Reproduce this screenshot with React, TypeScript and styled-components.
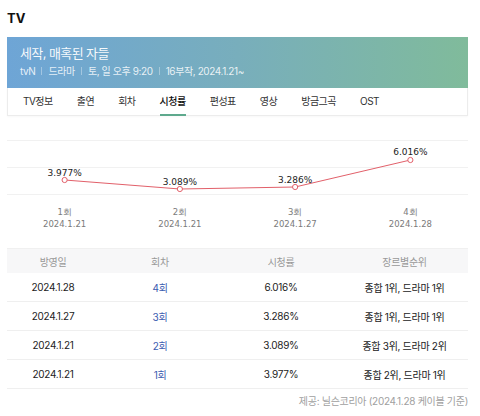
import React from 'react';
import styled, { createGlobalStyle } from 'styled-components';

const GlobalStyle = createGlobalStyle`
  body {
    margin: 0;
    background: #fff;
    font-family: 'Inter', 'Noto Sans CJK KR', sans-serif;
    color: #222;
  }
`;

const Page = styled.div`
  width: 461px;
  margin-left: 7px;
`;

const Heading = styled.h2`
  margin: 0;
  height: 37px;
  line-height: 36px;
  font-size: 13px;
  font-weight: 700;
  color: #111;
`;

const Banner = styled.div`
  height: 51px;
  box-sizing: border-box;
  padding: 7px 0 0 13px;
  background: linear-gradient(90deg, #6ea5d6 0%, #78aebc 50%, #80bb9b 100%);
  color: #fff;
`;

const Title = styled.div`
  font-size: 13px;
  line-height: 18px;
  letter-spacing: -0.6px;
  color: rgba(255, 255, 255, 0.95);
`;

const Meta = styled.div`
  display: flex;
  align-items: center;
  margin-top: 1px;
  font-size: 10px;
  line-height: 16px;
  letter-spacing: -0.4px;
  color: rgba(255, 255, 255, 0.85);
`;

const Sep = styled.span`
  width: 1px;
  height: 8px;
  margin: 0 6px;
  background: rgba(255, 255, 255, 0.35);
`;

const Tabs = styled.div`
  display: flex;
  gap: 24px;
  height: 28px;
  box-sizing: border-box;
  padding-left: 15px;
  border: 1px solid #ececec;
  border-top: 0;
  box-shadow: 0 1px 2px rgba(0, 0, 0, 0.03);
`;

const Tab = styled.div<{ $active?: boolean }>`
  position: relative;
  font-size: 10px;
  line-height: 27px;
  letter-spacing: -0.5px;
  color: ${(p) => (p.$active ? '#111' : '#333')};
  font-weight: ${(p) => (p.$active ? 500 : 400)};
  &::after {
    content: '';
    display: ${(p) => (p.$active ? 'block' : 'none')};
    position: absolute;
    left: 0;
    right: 0;
    bottom: -1px;
    height: 2px;
    background: #5ea98d;
  }
`;

const ChartWrap = styled.div`
  padding-top: 14px;
`;

const AxisRow = styled.div`
  display: grid;
  grid-template-columns: repeat(4, 1fr);
  margin: 6px 0 18px;
`;

const AxisLabel = styled.div`
  text-align: center;
  font-family: 'DejaVu Sans', sans-serif;
  font-size: 8.5px;
  line-height: 12px;
  color: #7a7a7a;
`;

const Table = styled.div`
  border-top: 1px solid #f0f0f0;
`;

const cols = '92px 122px 120px 127px';

const HeadRow = styled.div`
  display: grid;
  grid-template-columns: ${cols};
  height: 24px;
  align-items: center;
  background: #f7f7f8;
  font-size: 10px;
  color: #999;
  letter-spacing: -0.3px;
`;

const Row = styled.div`
  display: grid;
  grid-template-columns: ${cols};
  height: 29px;
  align-items: center;
  border-bottom: 1px solid #efefef;
  box-sizing: border-box;
  font-size: 10px;
  color: #222;
  letter-spacing: -0.3px;
`;

const Cell = styled.div<{ $link?: boolean }>`
  text-align: center;
  color: ${(p) => (p.$link ? '#3b5cb0' : 'inherit')};
`;

const Source = styled.div`
  text-align: right;
  font-size: 10px;
  line-height: 24px;
  color: #a0a0a0;
  letter-spacing: -0.3px;
`;

const tabs = ['TV정보', '출연', '회차', '시청률', '편성표', '영상', '방금그곡', 'OST'];

const points = [
  { ep: '1회', date: '2024.1.21', rate: '3.977%', y: 50, ly: 46 },
  { ep: '2회', date: '2024.1.21', rate: '3.089%', y: 59, ly: 54.5 },
  { ep: '3회', date: '2024.1.27', rate: '3.286%', y: 57, ly: 53 },
  { ep: '4회', date: '2024.1.28', rate: '6.016%', y: 30, ly: 25 },
];

const rows = [
  { date: '2024.1.28', ep: '4회', rate: '6.016%', rank: '종합 1위, 드라마 1위' },
  { date: '2024.1.27', ep: '3회', rate: '3.286%', rank: '종합 1위, 드라마 1위' },
  { date: '2024.1.21', ep: '2회', rate: '3.089%', rank: '종합 3위, 드라마 2위' },
  { date: '2024.1.21', ep: '1회', rate: '3.977%', rank: '종합 2위, 드라마 1위' },
];

const W = 461;
const colX = (i: number) => (W / 4) * i + W / 8;

const RatingChart = () => (
  <svg width={W} height={70} style={{ display: 'block' }}>
    {[10, 37, 64].map((y) => (
      <line key={y} x1={0} x2={W} y1={y + 0.5} y2={y + 0.5} stroke="#f1f1f1" />
    ))}
    <polyline
      points={points.map((p, i) => `${colX(i)},${p.y}`).join(' ')}
      fill="none"
      stroke="#e2606a"
      strokeWidth={1}
    />
    {points.map((p, i) => (
      <g key={i}>
        <circle cx={colX(i)} cy={p.y} r={2.6} fill="#fff" stroke="#e2606a" strokeWidth={1} />
        <text
          x={colX(i)}
          y={p.ly}
          textAnchor="middle"
          fontFamily="'DejaVu Sans', sans-serif"
          fontSize={9}
          fill="#222"
        >
          {p.rate}
        </text>
      </g>
    ))}
  </svg>
);

export default function App() {
  return (
    <>
      <GlobalStyle />
      <Page>
        <Heading>TV</Heading>
        <Banner>
          <Title>세작, 매혹된 자들</Title>
          <Meta>
            <span>tvN</span>
            <Sep />
            <span>드라마</span>
            <Sep />
            <span>토, 일 오후 9:20</span>
            <Sep />
            <span>16부작, 2024.1.21~</span>
          </Meta>
        </Banner>
        <Tabs>
          {tabs.map((t) => (
            <Tab key={t} $active={t === '시청률'}>
              {t}
            </Tab>
          ))}
        </Tabs>
        <ChartWrap>
          <RatingChart />
          <AxisRow>
            {points.map((p, i) => (
              <AxisLabel key={i}>
                {p.ep}
                <br />
                {p.date}
              </AxisLabel>
            ))}
          </AxisRow>
        </ChartWrap>
        <Table>
          <HeadRow>
            <Cell>방영일</Cell>
            <Cell>회차</Cell>
            <Cell>시청률</Cell>
            <Cell>장르별순위</Cell>
          </HeadRow>
          {rows.map((r, i) => (
            <Row key={i}>
              <Cell>{r.date}</Cell>
              <Cell $link>{r.ep}</Cell>
              <Cell>{r.rate}</Cell>
              <Cell>{r.rank}</Cell>
            </Row>
          ))}
        </Table>
        <Source>제공: 닐슨코리아 (2024.1.28 케이블 기준)</Source>
      </Page>
    </>
  );
}
